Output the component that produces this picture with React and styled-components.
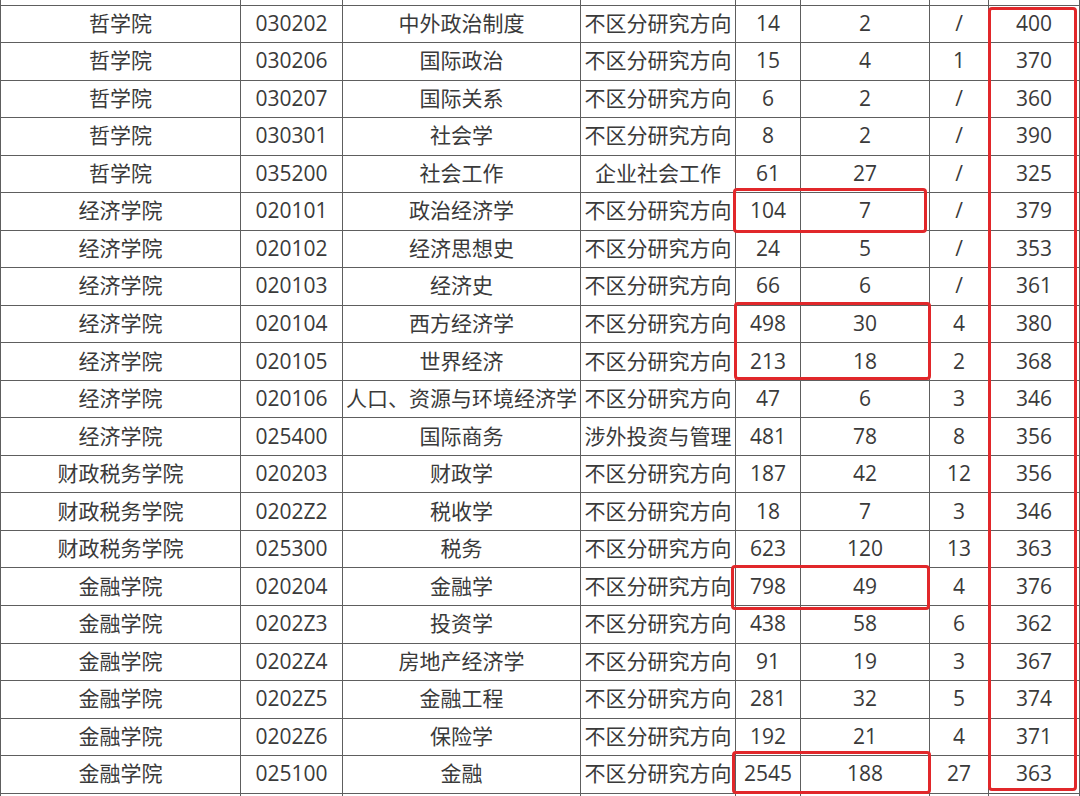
import React from "react";
import styled, { createGlobalStyle } from "styled-components";

const Global = createGlobalStyle`
  *, *::before, *::after { box-sizing: border-box; }
  html, body { margin: 0; padding: 0; background: #ffffff; }
  body {
    font-family: "Open Sans", "Noto Sans CJK SC", "Noto Sans", sans-serif;
    color: #3a3a3a;
  }
`;

const COLS = "241px 102px 238px 155px 65px 129px 59px 91px";
const LINE = "#5e5e5e";

const Page = styled.div`
  position: relative;
  width: 1080px;
  height: 796px;
  overflow: hidden;
  background: #fff;
`;

const Table = styled.div`
  display: flex;
  flex-direction: column;
  width: 1080px;
`;

const Row = styled.div`
  display: grid;
  grid-template-columns: ${COLS};
  height: ${(p) => p.$h}px;
`;

const Cell = styled.div`
  display: flex;
  align-items: center;
  justify-content: center;
  padding-bottom: 1px;
  border-right: 1px solid ${LINE};
  border-bottom: ${(p) => (p.$open ? "none" : `1px solid ${LINE}`)};
  font-size: 21px;
  line-height: 1;
  white-space: nowrap;
  overflow: hidden;
  letter-spacing: 0;
  &:first-child {
    border-left: 1px solid ${LINE};
  }
`;

const Highlight = styled.div`
  position: absolute;
  border: 3.5px solid #e1272a;
  border-radius: 4px;
  pointer-events: none;
`;

const rows = [
  ["哲学院", "030202", "中外政治制度", "不区分研究方向", "14", "2", "/", "400"],
  ["哲学院", "030206", "国际政治", "不区分研究方向", "15", "4", "1", "370"],
  ["哲学院", "030207", "国际关系", "不区分研究方向", "6", "2", "/", "360"],
  ["哲学院", "030301", "社会学", "不区分研究方向", "8", "2", "/", "390"],
  ["哲学院", "035200", "社会工作", "企业社会工作", "61", "27", "/", "325"],
  ["经济学院", "020101", "政治经济学", "不区分研究方向", "104", "7", "/", "379"],
  ["经济学院", "020102", "经济思想史", "不区分研究方向", "24", "5", "/", "353"],
  ["经济学院", "020103", "经济史", "不区分研究方向", "66", "6", "/", "361"],
  ["经济学院", "020104", "西方经济学", "不区分研究方向", "498", "30", "4", "380"],
  ["经济学院", "020105", "世界经济", "不区分研究方向", "213", "18", "2", "368"],
  ["经济学院", "020106", "人口、资源与环境经济学", "不区分研究方向", "47", "6", "3", "346"],
  ["经济学院", "025400", "国际商务", "涉外投资与管理", "481", "78", "8", "356"],
  ["财政税务学院", "020203", "财政学", "不区分研究方向", "187", "42", "12", "356"],
  ["财政税务学院", "0202Z2", "税收学", "不区分研究方向", "18", "7", "3", "346"],
  ["财政税务学院", "025300", "税务", "不区分研究方向", "623", "120", "13", "363"],
  ["金融学院", "020204", "金融学", "不区分研究方向", "798", "49", "4", "376"],
  ["金融学院", "0202Z3", "投资学", "不区分研究方向", "438", "58", "6", "362"],
  ["金融学院", "0202Z4", "房地产经济学", "不区分研究方向", "91", "19", "3", "367"],
  ["金融学院", "0202Z5", "金融工程", "不区分研究方向", "281", "32", "5", "374"],
  ["金融学院", "0202Z6", "保险学", "不区分研究方向", "192", "21", "4", "371"],
  ["金融学院", "025100", "金融", "不区分研究方向", "2545", "188", "27", "363"],
];

const boxes = [
  { left: 988, top: 7, width: 89, height: 784 },
  { left: 733, top: 188, width: 194, height: 45 },
  { left: 734, top: 302, width: 197, height: 78 },
  { left: 731, top: 565, width: 199, height: 45 },
  { left: 732, top: 751, width: 199, height: 43 },
];

const empty = Array.from({ length: 8 });

export default function App() {
  return (
    <>
      <Global />
      <Page>
        <Table>
          <Row $h={5.5}>
            {empty.map((_, i) => (
              <Cell key={i} />
            ))}
          </Row>
          {rows.map((r, ri) => (
            <Row key={ri} $h={37.54}>
              {r.map((c, ci) => (
                <Cell key={ci}>{c}</Cell>
              ))}
            </Row>
          ))}
          <Row $h={10}>
            {empty.map((_, i) => (
              <Cell key={i} $open />
            ))}
          </Row>
        </Table>
        {boxes.map((b, i) => (
          <Highlight key={i} style={b} />
        ))}
      </Page>
    </>
  );
}
